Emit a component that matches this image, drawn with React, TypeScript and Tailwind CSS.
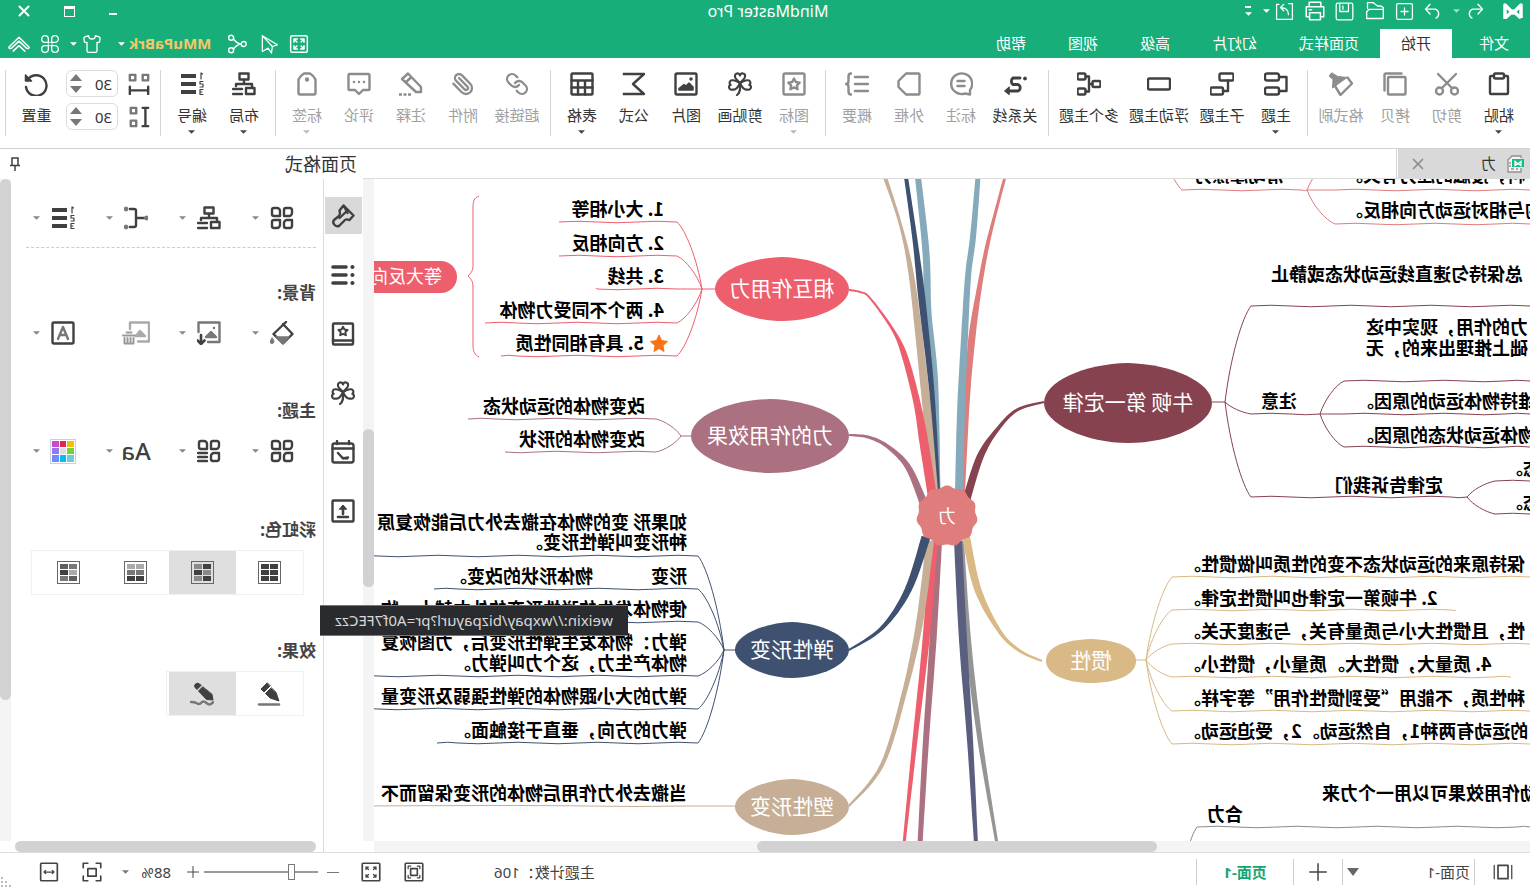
import { useState } from "react";
import type { ReactNode } from "react";
import { Link, Paperclip, Shirt } from "lucide-react";

interface IconProps {
  children: ReactNode;
  className?: string;
  stroke?: number;
}

const Icon = ({ children, className = "w-6 h-6", stroke = 2.4 }: IconProps) => (
  <svg
    className={`shrink-0 ${className}`}
    viewBox="0 0 24 24"
    fill="none"
    stroke="currentColor"
    strokeWidth={stroke}
    strokeLinecap="round"
    strokeLinejoin="round"
    aria-hidden="true"
  >
    {children}
  </svg>
);

const Caret = ({ className = "" }: { className?: string }) => (
  <svg className={`shrink-0 w-[7px] h-1 ${className}`} viewBox="0 0 8 4" fill="currentColor" aria-hidden="true">
    <path d="M0 0h8L4 4z" />
  </svg>
);

/* ---------- icon shapes ---------- */

const clover = (
  <g strokeWidth="2.1">
    <path d="M12 11C9 8 7 6.5 7 4.5A2.5 2.5 0 0 1 12 3.4 2.5 2.5 0 0 1 17 4.5C17 6.5 15 8 12 11z" />
    <path d="M12 11C8 8.5 6.5 8 4.6 8.3A2.5 2.5 0 0 0 2.7 12.8 2.5 2.5 0 0 0 4.6 17.5C7.3 18.2 10 15.5 12 11z" />
    <path d="M12 11C16 8.5 17.5 8 19.4 8.3A2.5 2.5 0 0 1 21.3 12.8 2.5 2.5 0 0 1 19.4 17.5C16.7 18.2 14 15.5 12 11z" />
    <path d="M12 11c0 5-1 9 3 12" />
  </g>
);

const fourTiles = (
  <>
    <path d="M4 2h4a2 2 0 0 1 2 2v6H5a3 3 0 0 1-3-3V4a2 2 0 0 1 2-2z" />
    <path d="M14 5a3 3 0 0 1 3-3h3a2 2 0 0 1 2 2v4a2 2 0 0 1-2 2h-6z" />
    <path d="M2 14h5a3 3 0 0 1 3 3v3a2 2 0 0 1-2 2H4a2 2 0 0 1-2-2z" />
    <path d="M14 14h6a2 2 0 0 1 2 2v4a2 2 0 0 1-2 2h-3a3 3 0 0 1-3-3z" />
  </>
);

const orgChart = (
  <>
    <rect x="7.5" y="1.5" width="9" height="6" />
    <path d="M12 8v4M4 15v-3h16v2" />
    <rect x="1.5" y="16" width="8.5" height="6" />
    <path d="M14 17h9M14 22h9" />
  </>
);

const numbering = (
  <>
    <path d="M8 4h15M8 12h15M8 20h15" strokeWidth="4" strokeLinecap="butt" />
    <path d="M1.5 2L3 1v6M1 9.5h3V12H1v3h3M1 17.5h3v5H1M2 20h2" strokeWidth="1.2" />
  </>
);

const star = "M12 6.5l1.8 3.5 3.9.6-2.8 2.7.7 3.9-3.6-1.8-3.6 1.8.7-3.9-2.8-2.7 3.9-.6z";

const icons: Record<string, ReactNode> = {
  paste: (
    <>
      <path d="M7 4H4a1 1 0 0 0-1 1v16a1 1 0 0 0 1 1h16a1 1 0 0 0 1-1V5a1 1 0 0 0-1-1h-3" />
      <rect x="7" y="1.5" width="10" height="5" rx="1.5" />
    </>
  ),
  cut: (
    <>
      <circle cx="4.5" cy="19" r="3.5" />
      <circle cx="19.5" cy="19" r="3.5" />
      <path d="M3 2l14 14M21 2L7 16" />
    </>
  ),
  copy: (
    <>
      <rect x="1.5" y="5" width="17.5" height="17.5" rx="1" />
      <path d="M5.5 1.5H21A1.5 1.5 0 0 1 22.5 3v15.5" />
    </>
  ),
  brush: (
    <>
      <path d="M5.5 5.5L1 11.5 12.5 23 18 14" />
      <path d="M21.5 1L24 4l-4 3.5.5 8.5L6 5.5l9-1z" fill="currentColor" strokeWidth="1" />
    </>
  ),
  topic: (
    <>
      <rect x="9" y="1.5" width="14" height="7" rx="2" />
      <rect x="9" y="15.5" width="14" height="7" rx="2" />
      <path d="M9 5H1.5v14H9" />
    </>
  ),
  subtopic: (
    <>
      <rect x="0.5" y="1.5" width="14" height="7" rx="1.5" />
      <rect x="11" y="15.5" width="12.5" height="7" rx="1.5" />
      <path d="M6 8.5V19h5" />
    </>
  ),
  floating: <rect x="1" y="6.5" width="22" height="11" rx="1.5" />,
  multi: (
    <>
      <rect x="0.5" y="9" width="8" height="6" rx="1.5" />
      <rect x="15.5" y="1.5" width="8" height="6" rx="1.5" />
      <rect x="15.5" y="16.5" width="8" height="6" rx="1.5" />
      <path d="M8.5 12H12M15.5 4.5H12v15h3.5" />
    </>
  ),
  relation: (
    <>
      <circle cx="2" cy="6.5" r="1.5" fill="currentColor" strokeWidth="1" />
      <path d="M7 6h7a4 4 0 0 1 0 6.500H9A3.5 3.5 0 0 0 9 19h10" strokeWidth="2.8" />
      <path d="M18 15l4.5 4-4.5 3.5z" fill="currentColor" strokeWidth="1" />
    </>
  ),
  callout: (
    <>
      <path d="M3 22.5V18A10.5 10.3 0 1 1 8 21.5L3 22.5" />
      <path d="M8.5 9h7M8.5 14h7" />
    </>
  ),
  boundary: <path d="M2.5 1.5H15L22.5 9v6L15 22.5H2.5a1 1 0 0 1-1-1v-19a1 1 0 0 1 1-1z" />,
  summary: (
    <>
      <path d="M1 5h13M1 12h13M1 19h13" />
      <path d="M18 1.5c2 0 2.5 1 2.5 3V9c0 2 .5 3 2.5 3-2 0-2.5 1-2.5 3v4.5c0 2-.5 3-2.5 3" />
    </>
  ),
  mark: (
    <>
      <rect x="1.5" y="1.5" width="21" height="21" rx="1.5" />
      <path d={star} />
    </>
  ),
  clover,
  picture: (
    <>
      <rect x="1.5" y="1.5" width="21" height="21" rx="1.5" />
      <path d="M5 18v-3l4-4 3 3 2-1.5 5 4V18z" fill="currentColor" strokeWidth="1.5" />
      <circle cx="7" cy="7" r="1" fill="currentColor" strokeWidth="1.5" />
    </>
  ),
  formula: <path d="M22 2H2l11 10L2 22h20" strokeLinecap="square" />,
  table: (
    <>
      <rect x="1.5" y="1.5" width="21" height="21" rx="1" />
      <path d="M1.5 8.5h21M1.5 15.5h21M9 8.5v14M16 8.5v14" />
    </>
  ),
  link: <Link className="w-6 h-6" strokeWidth={2.3} />,
  clip: <Paperclip className="w-6 h-6" strokeWidth={2.3} />,
  pencil: (
    <>
      <path d="M2 15v5h5L21 7l-6-5.5zM11.5 5l6 5.5" />
      <path d="M12 22.5h12" strokeDasharray="3 1.5" strokeLinecap="butt" />
    </>
  ),
  comment: (
    <>
      <path d="M1.5 3a1 1 0 0 1 1-1h19a1 1 0 0 1 1 1v14a1 1 0 0 1-1 1H16l-4 4-4-4H2.5a1 1 0 0 1-1-1z" />
      <path d="M7 10h.1M12 10h.1M17 10h.1" />
    </>
  ),
  tag: (
    <>
      <path d="M3.5 7.500c1-2.500 3-4.500 5.500-6h6c2.500 1.500 4.500 3.500 5.500 6V21a1.5 1.5 0 0 1-1.5 1.5H5A1.5 1.5 0 0 1 3.5 21z" />
      <circle cx="12" cy="7.5" r="1" fill="currentColor" />
    </>
  ),
  layout: orgChart,
  numbering,
  reset: (
    <>
      <path d="M20.5 8A10.3 10.3 0 1 0 22 15" />
      <path d="M22.5 3v6h-6z" fill="currentColor" strokeWidth="1.5" />
    </>
  ),
};

/* ---------- title bar ---------- */

const QuickAccess = () => (
  <div className="flex items-center text-white">
    <svg className="w-5 h-4 ml-[7px] mr-4" viewBox="0 0 20 16" fill="none" stroke="white" strokeWidth="3.5" aria-label="MindMaster" role="img">
      <path d="M2 15V2l8 8 8-8v13L10 8 2 15" strokeLinejoin="round" />
    </svg>
    <button aria-label="撤销" className="flex w-6 justify-center">
      <Icon className="w-[18px] h-[18px]" stroke={1.8}><path d="M8 3L2 9.5 8 16M2 9.5h13a6.5 6.5 0 0 1 1 12" /></Icon>
    </button>
    <Caret className="ml-[3px] mr-[7px] opacity-60" />
    <button aria-label="重做" className="flex w-[26px] justify-center">
      <Icon className="w-[18px] h-[18px]" stroke={1.8}><path d="M16 3l6 6.5-6 6.5M22 9.5H9a6.5 6.5 0 0 0-1 12" /></Icon>
    </button>
    <button aria-label="新建" className="flex w-[30px] justify-center">
      <Icon className="w-[19px] h-[19px]" stroke={1.6}><rect x="2" y="2" width="20" height="20" rx="2" /><path d="M12 7.5v9M7.5 12h9" /></Icon>
    </button>
    <button aria-label="打开" className="flex w-[30px] justify-center">
      <Icon className="w-5 h-5" stroke={1.6}><path d="M2 20V8l3-2h4l5-4h7v7M2 21V10h17l3 3v8z" /></Icon>
    </button>
    <button aria-label="保存" className="flex w-[30px] justify-center">
      <Icon className="w-[19px] h-[19px]" stroke={1.6}><rect x="1.5" y="1.5" width="21" height="21" rx="2" /><path d="M7 2v10h11V2M14 5v4" /></Icon>
    </button>
    <button aria-label="打印" className="flex w-[30px] justify-center">
      <Icon className="w-5 h-5" stroke={1.8}><path d="M5 7V1.5h14V7M5 19H1.5V7h21v12H19" /><rect x="5.5" y="14" width="13" height="8.5" /><path d="M16 10.5h3" /></Icon>
    </button>
    <button aria-label="导出" className="flex w-[30px] justify-center">
      <Icon className="w-[19px] h-[19px]" stroke={1.6}><path d="M7 2H2v20h20V3h-3M7 16C7 10 10 7 17 7M13 3l4 4-4 4" /></Icon>
    </button>
    <Caret />
    <button aria-label="自定义快速访问" className="flex flex-col items-center gap-1 ml-[11px]">
      <span className="h-0.5 w-1.5 bg-white" />
      <Caret />
    </button>
  </div>
);

const TitleBar = () => (
  <div className="flex justify-between h-[22px] items-center">
    <div className="flex-1"><QuickAccess /></div>
    <span className="pl-3 text-[16px] leading-5 text-white">MindMaster Pro</span>
    <div className="flex flex-1 justify-end items-center text-white h-5 pr-[18px] gap-[34px]">
      <button aria-label="最小化" className="flex items-end h-2"><span className="block w-2 h-[2px] bg-white" /></button>
      <button aria-label="最大化" className="w-[11px] h-[11px] border border-t-[3px] border-white" />
      <button aria-label="关闭">
        <Icon className="w-3 h-3" stroke={4}><path d="M3 3l18 18M21 3L3 21" /></Icon>
      </button>
    </div>
  </div>
);

const tabs = ["文件", "开始", "页面样式", "幻灯片", "高级", "视图", "帮助"];

const MenuBar = () => {
  const [active, setActive] = useState("开始");
  return (
    <div className="flex justify-between mt-[7px] h-[29px]">
      <nav className="flex text-[15px]">
        {tabs.map((tab, i) => (
          <button
            key={tab}
            onClick={() => setActive(tab)}
            className={`px-[21px] leading-[29px] ${i === 0 ? "mr-1.5" : ""} ${
              active === tab ? "bg-white text-[#333]" : "text-white"
            }`}
          >
            {tab}
          </button>
        ))}
      </nav>
      <div className="flex items-center text-white pr-2">
        <button aria-label="全屏">
          <Icon className="w-5 h-5" stroke={1.8}>
            <rect x="2" y="2" width="20" height="20" rx="2" />
            <path d="M6 10V6h4M6 6l3.5 3.5M14 6h4v4M18 6l-3.5 3.5M18 14v4h-4M18 18l-3.5-3.5M10 18H6v-4M6 18l3.5-3.5" />
          </Icon>
        </button>
        <button aria-label="发送" className="ml-2.5">
          <Icon className="w-5 h-5" stroke={1.5}><path d="M20 2v19l-7-4-4 6-1-8-6-2zM20 2L8 15" /></Icon>
        </button>
        <button aria-label="分享" className="ml-3">
          <Icon className="w-5 h-5" stroke={1.7}><circle cx="4" cy="12" r="3" /><circle cx="19" cy="4.5" r="3" /><circle cx="19" cy="19.5" r="3" /><path d="M7 12c4 0 6-2 9.5-6M7 12c4 0 6 2 9.5 6" /></Icon>
        </button>
        <button className="flex items-center ml-4 text-[#f6c667] text-[15px] font-bold">
          MMuPaBrk
          <Caret className="ml-1 text-white" />
        </button>
        <button aria-label="皮肤" className="flex items-center ml-4">
          <Shirt className="w-5 h-5" strokeWidth={1.6} />
          <Caret className="ml-[5px]" />
        </button>
        <button aria-label="应用" className="ml-2.5">
          <Icon className="w-5 h-5" stroke={1.6}>
            <path d="M10 10H6a4 4 0 1 1 4-4zM14 10h4a4 4 0 1 0-4-4zM10 14H6a4 4 0 1 0 4 4zM14 14h4a4 4 0 1 1-4 4z" />
            <path d="M10 10h4v4h-4z" strokeWidth="1" />
          </Icon>
        </button>
        <button aria-label="收起功能区" className="ml-2.5">
          <Icon className="w-[22px] h-5" stroke={1.8}><path d="M12 4L0 15.500c-.5 2 1.500 2.500 3 1.500l9-8.500 9 8.500c1.500 1 3.500.5 3-1.500zM5 20.500l7-6.500 7 6.500" /></Icon>
        </button>
      </div>
    </div>
  );
};

/* ---------- ribbon ---------- */

interface Tool {
  label: string;
  icon: string;
  disabled?: boolean;
  menu?: boolean;
}

const toolGroups: Tool[][] = [
  [
    { label: "粘贴", icon: "paste", menu: true },
    { label: "剪切", icon: "cut", disabled: true },
    { label: "拷贝", icon: "copy", disabled: true },
    { label: "格式刷", icon: "brush", disabled: true },
  ],
  [
    { label: "主题", icon: "topic", menu: true },
    { label: "子主题", icon: "subtopic" },
    { label: "浮动主题", icon: "floating" },
    { label: "多个主题", icon: "multi" },
  ],
  [
    { label: "关系线", icon: "relation" },
    { label: "标注", icon: "callout", disabled: true },
    { label: "外框", icon: "boundary", disabled: true },
    { label: "概要", icon: "summary", disabled: true },
  ],
  [
    { label: "图标", icon: "mark", disabled: true, menu: true },
    { label: "剪贴画", icon: "clover" },
    { label: "图片", icon: "picture" },
    { label: "公式", icon: "formula" },
    { label: "表格", icon: "table", menu: true },
  ],
  [
    { label: "超链接", icon: "link", disabled: true },
    { label: "附件", icon: "clip", disabled: true },
    { label: "注释", icon: "pencil", disabled: true },
    { label: "评论", icon: "comment", disabled: true },
    { label: "标签", icon: "tag", disabled: true, menu: true },
  ],
  [
    { label: "布局", icon: "layout", menu: true },
    { label: "编号", icon: "numbering", menu: true },
  ],
];

const toolWidths: Record<number, string> = { 2: "w-[52px]", 3: "w-[56px]", 4: "w-[70px]" };

const ToolButton = ({ label, icon, disabled, menu }: Tool) => (
  <button
    disabled={disabled}
    className={`flex flex-col items-center pt-3.5 ${toolWidths[label.length]} ${disabled ? "text-[#8c8c8c]" : "text-[#404040]"}`}
  >
    <Icon>{icons[icon]}</Icon>
    <span className={`mt-2 text-[15px] leading-[22px] whitespace-nowrap ${disabled ? "text-[#a0a0a0]" : "text-[#333]"}`}>
      {label}
    </span>
    {menu && <Caret className={`mt-1 ${disabled ? "text-[#bbb]" : "text-[#445]"}`} />}
  </button>
);

const Divider = () => <span className="w-px h-[66px] mt-3 mx-[5px] bg-[#d5d5d5]" />;

const Spinner = ({ label, children }: { label: string; children: ReactNode }) => {
  const [value, setValue] = useState(30);
  return (
    <div className="flex items-center gap-2.5 text-[#404040]">
      {children}
      <span className="flex items-center h-[27px] w-[52px] border border-[#dcdcdc] rounded-md">
        <input
          aria-label={label}
          value={value}
          onChange={(e) => setValue(Number(e.target.value) || 0)}
          className="w-[35px] pl-[5px] text-[15px] leading-5 text-[#333] bg-transparent outline-none"
        />
        <span className="flex flex-col gap-[5px] text-[#777]">
          <button aria-label="增加" onClick={() => setValue(value + 1)} className="flex">
            <svg className="w-3 h-[7px]" viewBox="0 0 12 7" fill="currentColor"><path d="M0 7h12L6 0z" /></svg>
          </button>
          <button aria-label="减少" onClick={() => setValue(value - 1)} className="flex">
            <svg className="w-3 h-[7px]" viewBox="0 0 12 7" fill="currentColor"><path d="M0 0h12L6 7z" /></svg>
          </button>
        </span>
      </span>
    </div>
  );
};

const Ribbon = () => (
  <div className="flex h-[91px] bg-white border-b border-[#d2d2d2] pl-[5px]">
    {toolGroups.map((group, i) => (
      <div key={i} className="flex">
        {group.map((tool) => (
          <ToolButton key={tool.label} {...tool} />
        ))}
        <Divider />
      </div>
    ))}
    <div className="flex flex-col gap-1.5 pt-3 pl-[5px]">
      <Spinner label="水平间距">
        <Icon className="w-[22px] h-[22px]" stroke={2.6}>
          <path d="M2 2h6v6H2zM16 2h6v6h-6z" className="text-[#777]" stroke="currentColor" />
          <path d="M2 19h20M2 15v8M22 15v8" />
        </Icon>
      </Spinner>
      <Spinner label="垂直间距">
        <Icon className="w-[22px] h-[22px]" stroke={2.6}>
          <path d="M15 2h6v6h-6zM15 16h6v6h-6z" className="text-[#777]" stroke="currentColor" />
          <path d="M5 2v20M2 2h6M2 22h6" />
        </Icon>
      </Spinner>
    </div>
    <button className="flex flex-col items-center pt-3.5 ml-1 w-[52px] text-[#404040]">
      <Icon>{icons.reset}</Icon>
      <span className="mt-2 text-[15px] leading-[22px] text-[#333]">重置</span>
    </button>
    <Divider />
  </div>
);

/* ---------- mind map ---------- */

type Point = [number, number, number];

// Closed outline of a stroke whose thickness changes along its points
const ribbonPath = (pts: Point[]) => {
  const samples: Point[] = [];
  for (let i = 0; i < pts.length - 1; i++) {
    const p0 = pts[Math.max(i - 1, 0)];
    const p1 = pts[i];
    const p2 = pts[i + 1];
    const p3 = pts[Math.min(i + 2, pts.length - 1)];
    for (let s = 0; s <= 8; s++) {
      const t = s / 8;
      samples.push(
        [0, 1, 2].map(
          (k) =>
            0.5 *
            (2 * p1[k] +
              (p2[k] - p0[k]) * t +
              (2 * p0[k] - 5 * p1[k] + 4 * p2[k] - p3[k]) * t * t +
              (3 * p1[k] - p0[k] - 3 * p2[k] + p3[k]) * t * t * t)
        ) as Point
      );
    }
  }
  const side = (sign: number) =>
    samples.map(([x, y, w], i) => {
      const a = samples[Math.max(i - 2, 0)];
      const b = samples[Math.min(i + 2, samples.length - 1)];
      const len = Math.hypot(b[0] - a[0], b[1] - a[1]) || 1;
      const nx = (-(b[1] - a[1]) / len) * (w / 2) * sign;
      const ny = ((b[0] - a[0]) / len) * (w / 2) * sign;
      return `${(x + nx).toFixed(1)} ${(y + ny).toFixed(1)}`;
    });
  return `M${side(1).join("L")}L${side(-1).reverse().join("L")}Z`;
};

const branches: { color: string; pts: Point[] }[] = [
  { color: "#84aabc", pts: [[591, 312, 3], [595, 201, 6], [602, 134, 7], [604, 74, 7], [612, -2, 6]] },
  { color: "#c6af96", pts: [[594, 315, 8], [599, 268, 9], [612, 148, 7], [620, 88, 5], [630, 44, 3], [645, -2, 4]] },
  { color: "#3e5170", pts: [[591, 312, 2], [598, 214, 5], [608, 121, 7], [615, 61, 5], [624, -2, 4]] },
  { color: "#ee5f6e", pts: [[598, 315, 9], [606, 264, 9], [613, 224, 7], [625, 178, 6], [637, 151, 3], [660, 119, 2], [670, 113, 2], [681, 111, 2]] },
  { color: "#ab7180", pts: [[606, 325, 8], [622, 288, 6], [643, 267, 4], [662, 258, 3], [681, 256, 2]] },
  { color: "#de7d7b", pts: [[568, 312, 6], [563, 218, 6], [558, 158, 7], [551, 111, 5], [543, 68, 4], [533, 28, 3], [525, -2, 3]] },
  { color: "#84aabc", pts: [[571, 314, 8], [569, 234, 8], [566, 168, 7], [562, 98, 6], [557, 58, 6], [552, -2, 5]] },
  { color: "#86424f", pts: [[564, 322, 8], [550, 278, 7], [533, 251, 4], [513, 231, 3], [486, 223, 2]] },
  { color: "#ab7180", pts: [[592, 362, 8], [597, 461, 7], [604, 561, 6], [610, 665, 5]] },
  { color: "#ee5f6e", pts: [[596, 362, 8], [604, 461, 7], [615, 561, 5], [626, 665, 3]] },
  { color: "#c6af96", pts: [[600, 362, 8], [610, 441, 7], [625, 511, 5], [648, 586, 4], [681, 627, 2]] },
  { color: "#3e5170", pts: [[604, 358, 9], [622, 411, 7], [648, 449, 4], [681, 471, 2]] },
  { color: "#959595", pts: [[569, 362, 6], [562, 461, 6], [550, 561, 5], [533, 665, 3]] },
  { color: "#5a5f80", pts: [[572, 362, 8], [567, 461, 8], [560, 561, 6], [554, 665, 4]] },
  { color: "#d9b985", pts: [[564, 358, 8], [552, 411, 7], [530, 453, 4], [510, 472, 3], [488, 482, 2]] },
];

// from: joint, bend: where the curve turns into an underline, lines: [height, end] of each underline
interface Twig {
  color: string;
  from: [number, number];
  bend: number;
  lines: [number, number][];
}

const twigs: Twig[] = [
  { color: "#ee5f6e", from: [828, 110], bend: 853, lines: [[43, 971], [77, 971], [110, 934], [144, 1045], [177, 1029]] },
  { color: "#ab7180", from: [849, 257], bend: 874, lines: [[240, 1062], [273, 1025]] },
  { color: "#3e5170", from: [806, 471], bend: 832, lines: [[377, 1180], [410, 1096], [443, 1180], [497, 1180], [530, 1180], [564, 1093]] },
  { color: "#86424f", from: [305, 223], bend: 279, lines: [[127, 0], [235, 210], [318, 63]] },
  { color: "#86424f", from: [210, 235], bend: 186, lines: [[202, 0], [235, 0], [268, 0]] },
  { color: "#86424f", from: [63, 318], bend: 35, lines: [[302, 0], [335, 0]] },
  { color: "#d9b985", from: [384, 481], bend: 358, lines: [[398, 0], [431, 74], [465, 0], [498, 19], [532, 0], [565, 0]] },
  { color: "#de7d7b", from: [223, 11], bend: 195, lines: [[-22, 0], [11, 0], [45, 0]] },
  { color: "#de7d7b", from: [375, -60], bend: 348, lines: [[11, 223]] },
  { color: "#8a8a8a", from: [352, 720], bend: 333, lines: [[648, 0]] },
];

const underline = (x1: number, x2: number, y: number) => {
  const dir = x2 > x1 ? 1 : -1;
  let d = "";
  let x = x1;
  let up = true;
  while ((x2 - x) * dir > 0) {
    const next = dir > 0 ? Math.min(x + 40, x2) : Math.max(x - 40, x2);
    d += `Q${(x + next) / 2} ${y + (up ? -1.5 : 1.5)} ${next} ${y}`;
    x = next;
    up = !up;
  }
  return d;
};

const twigPath = ({ from: [fx, fy], bend, lines }: Twig) =>
  lines
    .map(([y, end]) => {
      const dx = bend - fx;
      const dy = y - fy;
      return `M${fx} ${fy}C${fx + dx * 0.2} ${fy + dy * 0.45} ${bend - dx * 0.35} ${y - dy * 0.12} ${bend} ${y}${underline(bend, end, y)}`;
    })
    .join("");

interface Topic {
  text: string;
  x: number;
  y: number;
  rx: number;
  ry: number;
  color: string;
  k: number;
}

const topics: Topic[] = [
  { text: "相互作用力", x: 748, y: 110, rx: 67, ry: 32, color: "#ee5f6e", k: 0.52 },
  { text: "力的作用效果", x: 760, y: 257, rx: 79, ry: 37, color: "#ab7180", k: 0.52 },
  { text: "弹性形变", x: 738, y: 471, rx: 57, ry: 28, color: "#3e5170", k: 0.5 },
  { text: "塑性形变", x: 738, y: 628, rx: 57, ry: 28, color: "#c6af96", k: 0.5 },
  { text: "牛顿 第一定律", x: 402, y: 224, rx: 84, ry: 40, color: "#86424f", k: 0.52 },
  { text: "惯性", x: 439, y: 482, rx: 45, ry: 22, color: "#d9b985", k: 0.6 },
];

const blobPath = ({ x, y, rx, ry, k }: Topic) => {
  const a = rx * k;
  const b = ry * k;
  return (
    `M${x - rx} ${y}C${x - rx} ${y - b} ${x - a} ${y - ry + 1} ${x} ${y - ry}` +
    `C${x + a} ${y - ry + 1} ${x + rx} ${y - b - 1} ${x + rx} ${y}` +
    `C${x + rx} ${y + b} ${x + a - 2} ${y + ry} ${x} ${y + ry}` +
    `C${x - a} ${y + ry} ${x - rx} ${y + b} ${x - rx} ${y}Z`
  );
};

const scallop = () => {
  const pts: string[] = [];
  for (let i = 0; i <= 120; i++) {
    const a = (i / 120) * Math.PI * 2;
    const r = 29.5 + Math.cos(a * 11) * 1.1;
    pts.push(`${(583 + Math.sin(a) * r).toFixed(1)} ${(337 - Math.cos(a) * r).toFixed(1)}`);
  }
  return `M${pts.join("L")}Z`;
};

interface Note {
  x: number;
  y: number;
  text: string;
}

// Right-hand notes start at x, left-hand notes end at x
const rightNotes: Note[] = [
  { x: 866, y: 29, text: "1. 大小相等" },
  { x: 866, y: 63, text: "2. 方向相反" },
  { x: 866, y: 96, text: "3. 共线" },
  { x: 866, y: 130, text: "4. 两个不同受力物体" },
  { x: 886, y: 163, text: "5. 具有相同性质" },
  { x: 885, y: 226, text: "改变物体的运动状态" },
  { x: 885, y: 259, text: "改变物体的形状" },
  { x: 843, y: 342, text: "如果形 变的物体在撤去外力后能恢复原" },
  { x: 843, y: 362, text: "种形变叫弹性形变。" },
  { x: 843, y: 396, text: "形变\u3000\u3000\u3000 物体形状的改变。" },
  { x: 843, y: 429, text: "使物体发生的弹性形变的外力越大，物" },
  { x: 843, y: 462, text: "弹力：物体发生弹性形变后，力图恢复" },
  { x: 843, y: 483, text: "物体产生力，这个力叫弹力。" },
  { x: 843, y: 516, text: "弹力的大小跟物体的弹性强弱及形变量" },
  { x: 843, y: 550, text: "弹力的方向，垂直于接触面。" },
  { x: 843, y: 613, text: "当撤去外力作用后物体的形变保留而不" },
];

const leftNotes: Note[] = [
  { x: 336, y: -5, text: "滑动摩擦力" },
  { x: 185, y: -5, text: "料，接触的压力有关。" },
  { x: 185, y: 30, text: "的与相对运动方向相反。" },
  { x: 259, y: 94, text: "总保持匀速直线运动状态或静止" },
  { x: 164, y: 147, text: "力的作用，现实中这" },
  { x: 164, y: 168, text: "础上推理出来的，无" },
  { x: 269, y: 221, text: "注意" },
  { x: 174, y: 221, text: "维持物体运动的原因。" },
  { x: 174, y: 255, text: "物体运动状态的原因。" },
  { x: 195, y: 305, text: "定律告诉我们" },
  { x: 25, y: 288, text: "态。" },
  { x: 25, y: 322, text: "态。" },
  { x: 347, y: 384, text: "保持原来的运动状态不变的性质叫做惯性。" },
  { x: 347, y: 418, text: "2. 牛顿第一定律也叫惯性定律。" },
  { x: 347, y: 451, text: "性，且惯性大小与质量有关，与速度无关。" },
  { x: 347, y: 484, text: "4. 质量大，惯性大。质量小，惯性小。" },
  { x: 347, y: 518, text: "种性质，不能用“受到惯性作用”等字样。" },
  { x: 347, y: 551, text: "的运动有两种1，自然运动。2，受迫运动。" },
  { x: 208, y: 613, text: "动作用效果可以用一个力来" },
  { x: 323, y: 634, text: "合力" },
];

const MindMap = () => (
  <div className="relative flex-1 min-w-0 overflow-hidden bg-white font-['Noto_Sans_CJK_SC',sans-serif]">
    <svg className="absolute inset-0 w-full h-full" fill="none" aria-hidden="true">
      {branches.map((b, i) => (
        <path key={i} d={ribbonPath(b.pts)} fill={b.color} />
      ))}
      {twigs.map((t, i) => (
        <path key={i} d={twigPath(t)} stroke={t.color} />
      ))}
      <path d="M815 110h14" stroke="#ee5f6e" />
      <path d="M838 257h11" stroke="#ab7180" />
      <path d="M795 471h11" stroke="#3e5170" />
      <path d="M795 627h50q50 1 100 0t220 0" stroke="#c6af96" />
      <path d="M318 223h-13" stroke="#86424f" />
      <path d="M395 481h-12" stroke="#d9b985" />
      <path d="M1051 17c5 2 6 5 6 12v58c0 5 2 7 5 10c-3 3-5 5-5 11v58c0 7-2 10-6 12" stroke="#ee5f6e" />
      {topics.map((t) => (
        <path key={t.text} d={blobPath(t)} fill={t.color} />
      ))}
      <path d={scallop()} fill="#de7d7b" />
      <rect x="1073" y="82" width="180" height="32" rx="16" fill="#ee5f6e" />
      <path d="M871 156l2.5 5.5 6 1-4.5 4 1 6-5-3-5 3 1-6-4.500-4 6-1z" fill="#f97316" stroke="#f97316" strokeLinejoin="round" />
    </svg>
    {topics.map((t) => (
      <span
        key={t.text}
        className="absolute -translate-x-1/2 -translate-y-1/2 text-[21px] leading-6 text-white whitespace-nowrap"
        style={{ left: t.x, top: t.y - 2 }}
      >
        {t.text}
      </span>
    ))}
    <span className="absolute left-[583px] top-[336px] -translate-x-1/2 -translate-y-1/2 text-[18px] leading-6 text-white">力</span>
    <span className="absolute left-[1088px] top-[84px] text-[18px] leading-6 text-white whitespace-nowrap">等大反向</span>
    {rightNotes.map((n) => (
      <span
        key={n.y}
        className="absolute -translate-y-1/2 text-[18px] leading-5 font-bold text-black whitespace-pre"
        style={{ left: n.x, top: n.y }}
      >
        {n.text}
      </span>
    ))}
    {leftNotes.map((n, i) => (
      <span
        key={i}
        className="absolute -translate-x-full -translate-y-1/2 text-[18px] leading-5 font-bold text-black whitespace-pre"
        style={{ left: n.x, top: n.y }}
      >
        {n.text}
      </span>
    ))}
  </div>
);

const Workspace = () => (
  <main className="flex flex-col flex-1 min-w-0">
    <div className="flex h-[30px] border-b border-[#dcdcdc]">
      <div className="flex items-center w-[132px] pl-1.5 pr-3.5 bg-[#d9d9d9] text-[#333]">
        <svg className="w-[18px] h-[18px]" viewBox="0 0 18 18" fill="none" stroke="#909090" strokeWidth="1.3" aria-hidden="true">
          <path d="M3 3V1h9l4 4v12H3v-4M6 14h2M10 14h3M13 8h2M13 11h2" fill="#f4f4f4" />
          <rect x="0" y="4" width="12" height="8" fill="#0fbf83" stroke="none" />
          <path d="M3 10.5v-4L6 9l3-2.5v4L6 8.5z" stroke="#fff" />
        </svg>
        <span className="ml-2.5 flex-1 text-[15px]">力</span>
        <button aria-label="关闭标签页" className="text-[#8c8c8c]">
          <Icon className="w-3 h-3" stroke={3.5}><path d="M3 3l18 18M21 3L3 21" /></Icon>
        </button>
      </div>
      <span className="w-px ml-px bg-[#d5d5d5]" />
    </div>
    <div className="flex flex-1 min-h-0">
      <MindMap />
      <div className="w-[11px] bg-[#f4f4f4] pt-[250px]">
        <div className="h-[158px] rounded-md bg-[#d2d2d2]" />
      </div>
    </div>
    <div className="flex h-[11px] bg-[#f4f4f4] mr-[11px]">
      <div className="ml-[373px] w-[400px] rounded-md bg-[#d2d2d2]" />
    </div>
  </main>
);

/* ---------- format panel ---------- */

const sideTabs: { name: string; icon: ReactNode }[] = [
  {
    name: "页面格式",
    icon: (
      <>
        <path d="M11.5 1.5l-10 10 4 4.500c3-1 4-1 5.500 1l4.500 4.500c3 2.500 8-2 5.500-5.500L16 12c-1.500-1.500-1-3-.5-5.500z" />
        <path d="M7 6l8.500 8M11 2L7.500 9" />
      </>
    ),
  },
  {
    name: "大纲",
    icon: (
      <>
        <path d="M9 4h13M9 12h13M9 20h13" strokeWidth="3.6" />
        <path d="M2.5 4h.1M2.5 12h.1M2.5 20h.1" strokeWidth="4" />
      </>
    ),
  },
  {
    name: "图标",
    icon: (
      <>
        <rect x="2" y="1.5" width="20" height="21" rx="1" />
        <path d="M2 18.5h20" />
        <path d={star} transform="translate(2.4 -0.5) scale(0.8)" />
      </>
    ),
  },
  { name: "剪贴画", icon: clover },
  {
    name: "任务",
    icon: (
      <>
        <rect x="1.5" y="3.5" width="21" height="19" rx="2" />
        <path d="M1.5 8.5h21M6 1v3M18 1v3M7 17.500l5 1 5-5.500M8 18.500l4-.5" />
      </>
    ),
  },
  {
    name: "导出",
    icon: (
      <>
        <rect x="1.5" y="1.5" width="21" height="21" rx="1" />
        <path d="M7 18h10M12 15V8" strokeWidth="2.6" />
        <path d="M8.5 10L12 6l3.5 4z" fill="currentColor" strokeWidth="1" />
      </>
    ),
  },
];

interface CellProps {
  label: string;
  children: ReactNode;
  menu?: boolean;
  disabled?: boolean;
}

const Cell = ({ label, children, menu = true, disabled }: CellProps) => (
  <button
    aria-label={label}
    disabled={disabled}
    className={`flex shrink-0 items-center w-[73px] h-8 pl-1 ${disabled ? "text-[#999]" : "text-[#404040]"}`}
  >
    <span className="flex w-7 justify-center">{children}</span>
    {menu && <Caret className="ml-[9px] text-[#888]" />}
  </button>
);

const Heading = ({ children }: { children: ReactNode }) => (
  <h2 className="text-[17px] leading-6 font-bold text-[#444]">{children}</h2>
);

const palette = ["#f0c000", "#e0284f", "#c44ccf", "#76cf3c", "#dedede", "#9678ee", "#6bcbd8", "#00bdf2", "#7286ff"];

const rainbow: string[][] = [
  ["#404040", "#404040", "#404040", "#404040", "#404040", "#404040"],
  ["#404040", "#8a8a8a", "#8a8a8a", "#404040", "#404040", "#8a8a8a"],
  ["#aaaaaa", "#aaaaaa", "#777777", "#777777", "#404040", "#404040"],
  ["#777777", "#606060", "#aaaaaa", "#404040", "#606060", "#777777"],
];

const FormatPanel = () => {
  const [side, setSide] = useState("页面格式");
  const [color, setColor] = useState(1);
  const [effect, setEffect] = useState(1);
  return (
    <aside className="flex flex-col w-[363px] bg-white">
      <div className="flex justify-between h-[30px] pl-1.5 pr-2.5">
        <h1 className="text-[18px] leading-[30px] text-[#333]">页面格式</h1>
        <button aria-label="固定面板" className="text-[#404040]">
          <svg className="w-2.5 h-3.5" viewBox="0 0 10 14" fill="none" stroke="currentColor" strokeWidth="1.5">
            <path d="M2 8.5V1h6v7.500M0 8.5h10M5 8.5V14" />
          </svg>
        </button>
      </div>
      <div className="flex flex-1 min-h-0">
        <div className="flex flex-col items-start gap-[22px] w-10 pt-[18px] pl-px border-r border-[#dcdcdc]">
          {sideTabs.map((tab) => (
            <button
              key={tab.name}
              aria-label={tab.name}
              onClick={() => setSide(tab.name)}
              className={`flex items-center justify-center w-[37px] h-[37px] text-[#404040] ${side === tab.name ? "bg-[#d9d9d9]" : ""}`}
            >
              <Icon>{tab.icon}</Icon>
            </button>
          ))}
        </div>
        <div className="flex flex-col flex-1 min-w-0">
          <div className="flex-1 pl-[7px] pt-[23px]">
            <div className="flex pl-4">
              <Cell label="布局样式"><Icon>{fourTiles}</Icon></Cell>
              <Cell label="结构"><Icon>{orgChart}</Icon></Cell>
              <Cell label="连线样式">
                <Icon>
                  <path d="M3 12h9M18 3h-4a2 2 0 0 0-2 2v14a2 2 0 0 0 2 2h4" />
                  <g className="text-[#777]" fill="currentColor" stroke="currentColor" strokeWidth="1">
                    <circle cx="1.5" cy="12" r="2" /><circle cx="22" cy="3" r="2" /><circle cx="22" cy="21" r="2" />
                  </g>
                </Icon>
              </Cell>
              <Cell label="编号"><Icon>{numbering}</Icon></Cell>
            </div>
            <hr className="mt-[13px] mr-[15px] border-t border-dashed border-[#ccc]" />

            <div className="mt-[33px]"><Heading>背景:</Heading></div>
            <div className="flex pl-4 mt-3">
              <Cell label="背景颜色">
                <Icon>
                  <path d="M11 3L1.5 13l9.5 9.5 9.5-9.500L8 1" />
                  <path d="M5 16h13l-7 6.500z" className="text-[#777]" fill="currentColor" strokeWidth="1.5" />
                  <path d="M22 17l2 3.5a2 2 0 1 1-4 0z" className="text-[#777]" fill="currentColor" stroke="currentColor" strokeWidth="1" />
                </Icon>
              </Cell>
              <Cell label="背景图片">
                <Icon>
                  <g className="text-[#777]" stroke="currentColor">
                    <path d="M13 21H1.5V1.5h21V11" />
                    <path d="M5 16l5-5 5 5z" fill="currentColor" />
                    <path d="M7 7h.1" />
                  </g>
                  <path d="M20 14v9M16.5 19.5L20 23l3.5-3.500" strokeWidth="2.6" />
                </Icon>
              </Cell>
              <Cell label="删除背景图片" menu={false} disabled>
                <Icon className="w-7 h-6">
                  <path d="M10 20.5H-1v-19h19V8" className="text-[#aaa]" stroke="currentColor" />
                  <path d="M3 15l5-5 4 5z" className="text-[#aaa]" fill="currentColor" stroke="currentColor" />
                  <path d="M13 14.5h12M16.5 11.5h5M14.5 17v5.500h9V17M17.5 17v4M20.5 17v4" strokeWidth="2" />
                </Icon>
              </Cell>
              <Cell label="水印">
                <Icon>
                  <rect x="1.5" y="1.5" width="21" height="21" rx="1.5" />
                  <path d="M7 18l5-12 5 12M8.5 14h7" className="text-[#777]" stroke="currentColor" />
                </Icon>
              </Cell>
            </div>

            <div className="mt-[50px]"><Heading>主题:</Heading></div>
            <div className="flex pl-4 mt-3">
              <Cell label="主题"><Icon>{fourTiles}</Icon></Cell>
              <Cell label="主题布局">
                <Icon>
                  <path d="M4 2h4a2 2 0 0 1 2 2v6H5a3 3 0 0 1-3-3V4a2 2 0 0 1 2-2zM14 5a3 3 0 0 1 3-3h3a2 2 0 0 1 2 2v4a2 2 0 0 1-2 2h-6zM2 14h5a3 3 0 0 1 3 3v3a2 2 0 0 1-2 2H4a2 2 0 0 1-2-2z" />
                  <path d="M14 14h9M14 18h9M14 22h9" />
                </Icon>
              </Cell>
              <Cell label="主题字体"><span className="text-[24px] leading-6 font-medium">Aa</span></Cell>
              <Cell label="主题颜色">
                <span className="grid shrink-0 grid-cols-3 gap-px w-[26px] h-[25px] p-px border border-[#c8d0e0]">
                  {palette.map((c) => (
                    <span key={c} style={{ backgroundColor: c }} />
                  ))}
                </span>
              </Cell>
            </div>

            <div className="mt-[51px]"><Heading>彩虹色:</Heading></div>
            <div className="flex w-[273px] h-[45px] ml-3 mt-2 border border-[#f0f0f0]">
              {rainbow.map((cells, i) => (
                <button
                  key={i}
                  aria-label={`彩虹色 ${i + 1}`}
                  onClick={() => setColor(i)}
                  className={`flex w-[67px] items-center justify-center ${color === i ? "bg-[#dfdfdf]" : ""}`}
                >
                  <span className="grid grid-cols-2 gap-px w-[23px] h-[23px] p-0.5 border border-[#666]">
                    {cells.map((c, j) => (
                      <span key={j} style={{ backgroundColor: c }} />
                    ))}
                  </span>
                </button>
              ))}
            </div>

            <div className="mt-[44px]"><Heading>效果:</Heading></div>
            <div className="flex w-[138px] h-[45px] ml-3 mt-2 border border-[#f0f0f0] text-[#404040]">
              <button aria-label="直线" onClick={() => setEffect(0)} className={`flex w-[67px] items-center justify-center ${effect === 0 ? "bg-[#dfdfdf]" : ""}`}>
                <Icon>
                  <path d="M14 1l6 6-3 3-6-6zM10 6l5.5 5.5L11 16l-9 3 3-8.500z" fill="currentColor" strokeWidth="1" />
                  <path d="M2 22.5h20" className="text-[#777]" stroke="currentColor" />
                </Icon>
              </button>
              <button aria-label="手绘" onClick={() => setEffect(1)} className={`flex w-[67px] items-center justify-center ${effect === 1 ? "bg-[#dfdfdf]" : ""}`}>
                <Icon>
                  <path d="M14.5 2a2.8 2.8 0 0 1 4 4L17 7.5l-4-4zM11.5 5l4 4-8 8.5L1 18l1-5.500z" fill="currentColor" strokeWidth="1" />
                  <path d="M0 20c2 0 2 2.5 4.500 2.500S8 19.5 10.5 19.5s2 2.5 4.500 2.500 2-2 8-2" className="text-[#777]" stroke="currentColor" />
                </Icon>
              </button>
            </div>
          </div>
          <div className="h-[11px] mr-1 ml-[7px] rounded-md bg-[#d2d2d2]" />
        </div>
        <div className="w-[11px] bg-[#f4f4f4] mb-[11px]">
          <div className="h-[521px] rounded-md bg-[#d2d2d2]" />
        </div>
      </div>
    </aside>
  );
};

/* ---------- status bar ---------- */

const StatusBar = () => {
  const [zoom, setZoom] = useState(88);
  return (
    <footer className="relative flex items-center justify-between h-[39px] border-t border-[#dcdcdc] bg-white text-[#444] text-[15px]">
      <div className="flex items-center h-full">
        <button aria-label="大纲视图" className="ml-[17px]">
          <Icon className="w-5 h-5" stroke={2}><path d="M1.5 4v16M22.5 4v16" strokeWidth="1.5" /><rect x="6" y="4" width="12" height="16" /></Icon>
        </button>
        <div className="flex items-center h-[26px] ml-[18px] pl-1 border-l border-[#ccc]">
          <select aria-label="页面" className="appearance-none w-[111px] bg-transparent outline-none text-[15px]">
            <option>页面-1</option>
          </select>
          <svg className="w-3 h-2" viewBox="0 0 12 8" fill="#666" aria-hidden="true"><path d="M0 0h12L6 8z" /></svg>
        </div>
        <button aria-label="添加页面" className="flex items-center justify-center w-[50px] h-[26px] ml-1 border-x border-[#ccc]">
          <Icon className="w-[18px] h-[18px]" stroke={2}><path d="M12 1v22M1 12h22" /></Icon>
        </button>
        <button className="h-[26px] w-[97px] border-r border-[#ccc] text-[15px] leading-6 font-bold text-[#17a673] text-center">页面-1</button>
      </div>
      <div className="flex items-center">
        <span className="mr-[70px] text-[15px]">主题计数：106</span>
        <button aria-label="适合页面">
          <Icon className="w-5 h-5" stroke={2}><rect x="1.5" y="1.5" width="21" height="21" rx="1" /><rect x="8" y="8" width="8" height="8" /><path d="M5 8V5h3M16 5h3v3M19 16v3h-3M8 19H5v-3" strokeWidth="1.5" /></Icon>
        </button>
        <button aria-label="全屏显示" className="ml-[23px]">
          <Icon className="w-5 h-5" stroke={2}><rect x="1.5" y="1.5" width="21" height="21" rx="1" /><path d="M6 9V6h3M6 6l3 3M15 6h3v3M18 6l-3 3M18 15v3h-3M18 18l-3-3M9 18H6v-3M6 18l3-3" strokeWidth="1.5" /></Icon>
        </button>
        <button aria-label="缩小" className="ml-[22px] flex h-5 w-3 items-center"><span className="w-3 h-px bg-[#777]" /></button>
        <input
          type="range"
          aria-label="缩放"
          min={10}
          max={370}
          value={zoom}
          onChange={(e) => setZoom(Number(e.target.value))}
          className="appearance-none ml-[9px] w-[114px] h-5 bg-transparent [&::-webkit-slider-runnable-track]:h-0.5 [&::-webkit-slider-runnable-track]:bg-[#999] [&::-webkit-slider-thumb]:appearance-none [&::-webkit-slider-thumb]:w-[7px] [&::-webkit-slider-thumb]:h-4 [&::-webkit-slider-thumb]:-mt-[7px] [&::-webkit-slider-thumb]:bg-white [&::-webkit-slider-thumb]:border [&::-webkit-slider-thumb]:border-[#777]"
        />
        <button aria-label="放大" className="ml-[5px]">
          <Icon className="w-3 h-3" stroke={2}><path d="M12 1v22M1 12h22" /></Icon>
        </button>
        <button className="flex items-center ml-4">
          <span className="w-[42px] text-left">{zoom}%</span>
          <Caret className="text-[#777]" />
        </button>
        <button aria-label="适应窗口" className="ml-5">
          <Icon className="w-5 h-5" stroke={2}><path d="M1.5 7V1.5H7M17 1.5h5.500V7M22.5 17v5.500H17M7 22.5H1.5V17" /><rect x="7" y="8" width="10" height="9" /></Icon>
        </button>
        <button aria-label="适应宽度" className="ml-[23px] mr-[39px]">
          <Icon className="w-5 h-5" stroke={2}><rect x="2" y="1.5" width="20" height="21" rx="1" /><path d="M6 12h12M8 10l-2 2 2 2M16 10l2 2-2 2" strokeWidth="1.5" /></Icon>
        </button>
      </div>
      <svg className="absolute right-0 bottom-0.5 w-3 h-3" viewBox="0 0 12 12" fill="#bbb" aria-hidden="true">
        <path d="M9 0h2v2H9zM5 4h2v2H5zM9 4h2v2H9zM1 8h2v2H1zM5 8h2v2H5zM9 8h2v2H9z" />
      </svg>
    </footer>
  );
};

export default function App() {
  return (
    <div className="-scale-x-100 relative flex flex-col h-screen overflow-hidden bg-white font-['Noto_Sans','Noto_Sans_CJK_SC',sans-serif]">
      <header className="bg-[#17ae79]">
        <TitleBar />
        <MenuBar />
      </header>
      <Ribbon />
      <div className="flex flex-1 min-h-0">
        <Workspace />
        <FormatPanel />
      </div>
      <StatusBar />
      <div
        role="tooltip"
        className="absolute right-[320px] top-[605px] h-[31px] px-[15px] border-y border-[#777] bg-[#2a2b2e] text-[15px] leading-[29px] text-[#d8d8d8] whitespace-nowrap"
      >
        weixin://wxpay/bizpayurl?pr=A0f7FECzz
      </div>
    </div>
  );
}
